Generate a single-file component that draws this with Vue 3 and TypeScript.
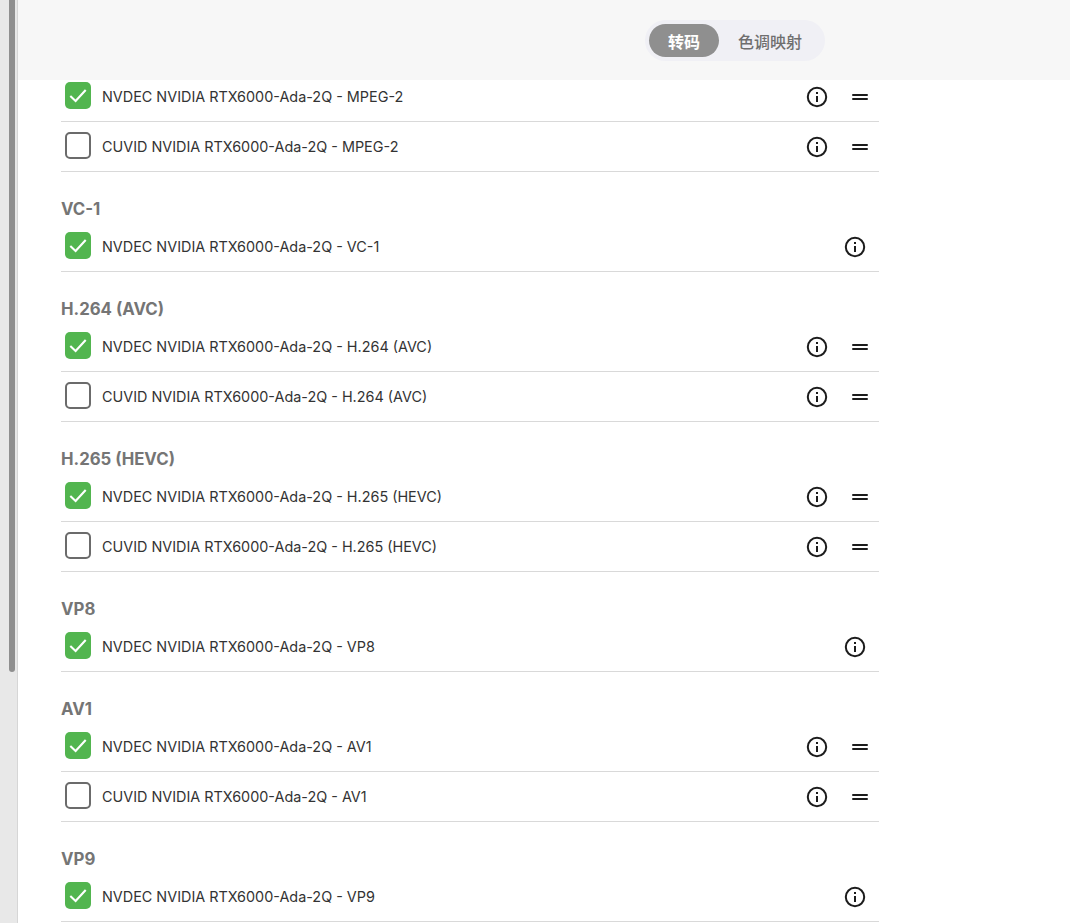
<script setup lang="ts">
interface Row { label: string; checked: boolean; drag: boolean }
interface Group { title?: string; rows: Row[] }
const gpu = 'NVIDIA RTX6000-Ada-2Q'
const both = (c: string): Row[] => [
  { label: `NVDEC ${gpu} - ${c}`, checked: true, drag: true },
  { label: `CUVID ${gpu} - ${c}`, checked: false, drag: true },
]
const one = (c: string): Row[] => [{ label: `NVDEC ${gpu} - ${c}`, checked: true, drag: false }]
const groups: Group[] = [
  { rows: both('MPEG-2') },
  { title: 'VC-1', rows: one('VC-1') },
  { title: 'H.264 (AVC)', rows: both('H.264 (AVC)') },
  { title: 'H.265 (HEVC)', rows: both('H.265 (HEVC)') },
  { title: 'VP8', rows: one('VP8') },
  { title: 'AV1', rows: both('AV1') },
  { title: 'VP9', rows: one('VP9') },
]
</script>

<template>
  <div class="page">
    <div class="track"><div class="thumb"></div></div>
    <div class="main">
      <header class="top">
        <div class="tabs">
          <span class="tab active">转码</span>
          <span class="tab">色调映射</span>
        </div>
      </header>
      <div class="list">
        <section v-for="(g, i) in groups" :key="i" class="group">
          <h3 v-if="g.title" class="title">{{ g.title }}</h3>
          <div v-for="r in g.rows" :key="r.label" class="row">
            <span class="box" :class="{ on: r.checked }">
              <svg v-if="r.checked" viewBox="0 0 26 27" width="26" height="27">
                <path d="M5.3 14 L10.6 19 L20.7 8" fill="none" stroke="#fff" stroke-width="2.1" />
              </svg>
            </span>
            <span class="label">{{ r.label }}</span>
            <button class="icon" :class="{ near: r.drag }" type="button" aria-label="info">
              <svg viewBox="0 0 24 24" width="24" height="24">
                <circle cx="12" cy="12" r="9.2" fill="none" stroke="#1c1c1c" stroke-width="2" />
                <rect x="11" y="11" width="2" height="6" fill="#1c1c1c" />
                <rect x="11" y="7" width="2" height="2" fill="#1c1c1c" />
              </svg>
            </button>
            <span v-if="r.drag" class="drag" aria-label="drag">
              <i></i><i></i>
            </span>
          </div>
        </section>
      </div>
    </div>
  </div>
</template>

<style>
html, body { margin: 0; background: #fff; }
</style>

<style scoped>
.page {
  display: flex;
  height: 923px;
  overflow: hidden;
  font-family: Inter, "Noto Sans CJK SC", sans-serif;
}
.track {
  flex: none;
  width: 18px;
  padding-left: 9px;
  box-sizing: border-box;
  background: #e8e8e8;
  border-right: 1px solid #d6d6d6;
}
.thumb {
  width: 6px;
  height: 672px;
  background: #8f8f8f;
  border-radius: 0 0 3px 3px;
}
.main { flex: 1; min-width: 0; }
.top {
  position: relative;
  z-index: 1;
  height: 80px;
  box-sizing: border-box;
  background: #f7f7f7;
  padding: 20px 0 0 627px;
}
.tabs {
  display: inline-flex;
  width: 180px;
  height: 41px;
  box-sizing: border-box;
  padding: 4px;
  border-radius: 20.5px;
  background: #f0f0f5;
}
.tab {
  display: flex;
  align-items: center;
  justify-content: center;
  height: 33px;
  padding: 0 19px;
  border-radius: 16.5px;
  font-size: 16px;
  font-weight: 500;
  color: #6f6f6f;
}
.tab.active {
  background: #8f8f8f;
  color: #fff;
  font-weight: 700;
}
.list {
  margin-top: -8px;
  width: 818px;
  margin-left: 43px;
}
.title {
  margin: 0;
  height: 50px;
  padding-top: 27px;
  box-sizing: border-box;
  font-size: 16.8px;
  line-height: 20px;
  font-weight: 700;
  color: #757575;
}
.row {
  display: flex;
  align-items: center;
  height: 50px;
  box-sizing: border-box;
  border-bottom: 1px solid #d9d9d9;
  padding-left: 4px;
}
.box {
  flex: none;
  width: 26px;
  height: 27px;
  box-sizing: border-box;
  border: 2px solid #6b6b6b;
  border-radius: 5px;
  margin: 0 11px 2px 0;
}
.box.on {
  border: 0;
  background: #52b54f;
}
.box svg { display: block; }
.label {
  flex: 1;
  font-size: 14.4px;
  color: #333;
}
.icon {
  flex: none;
  width: 24px;
  height: 24px;
  padding: 0;
  border: 0;
  background: none;
  margin-right: 12px;
}
.icon.near { margin-right: 0; }
.icon svg { display: block; }
.drag {
  flex: none;
  width: 16px;
  margin: 0 11px 0 23px;
  display: flex;
  flex-direction: column;
  gap: 2px;
}
.drag i {
  display: block;
  height: 2px;
  border-radius: 1px;
  background: #1c1c1c;
}
</style>
